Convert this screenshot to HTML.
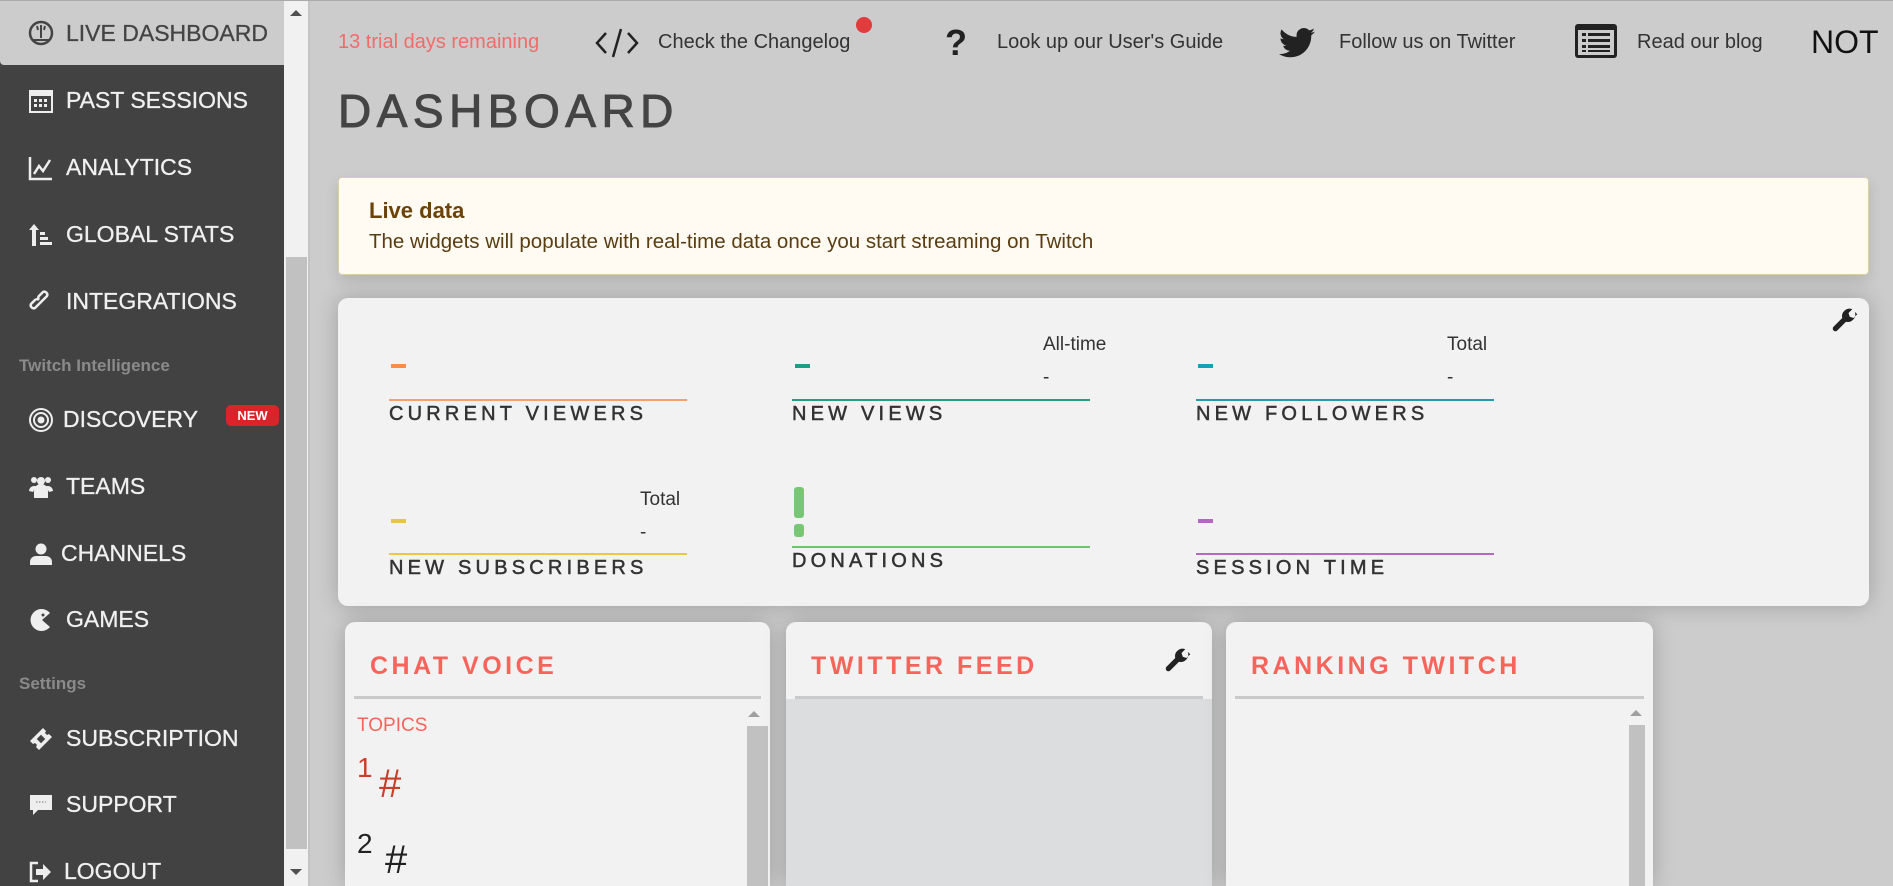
<!DOCTYPE html>
<html style="overflow:hidden;height:886px"><head><meta charset="utf-8"><style>
*{margin:0;padding:0;box-sizing:border-box}
body{width:1893px;height:886px;overflow:hidden;background:#cccccc;font-family:"Liberation Sans",sans-serif;position:relative}
.a{position:absolute;white-space:nowrap}
#sb{left:0;top:0;width:284px;height:886px;background:#424242}
.mi{position:absolute;left:0;width:284px;height:66px;color:#f0f0f0;font-size:23px;line-height:66px;-webkit-text-stroke:0.3px #f0f0f0}
.mi .ic{position:absolute;left:28px;top:21px;width:26px;height:26px}
.mi .t{position:absolute;left:66px}
.sec{position:absolute;left:19px;color:#8a8a8a;font-weight:bold;font-size:17px}
.lbl{font-size:20px;letter-spacing:4.2px;color:#333;-webkit-text-stroke:0.5px #333}
.ul{position:absolute;height:1.5px;width:298px}
.dash{position:absolute;width:15px;height:4px}
.sm{font-size:19px;color:#333}
.card{position:absolute;background:#f2f2f2;border-radius:10px;box-shadow:0 0 22px rgba(0,0,0,.22);overflow:hidden}
.ct{position:absolute;left:25px;top:30px;font-size:25px;letter-spacing:3.5px;color:#f7645c;font-weight:bold}
.cl{position:absolute;left:9px;right:9px;top:74px;height:3px;background:#cacaca}
.tb{font-size:20px;color:#333}
</style></head><body>
<div style="position:absolute;left:0;top:0;width:1893px;height:1px;background:#aaa;z-index:5"></div>
<div id="sb" class="a">
 <div class="mi" style="top:0;height:65px;background:#cccccc;color:#444;-webkit-text-stroke:0.3px #444;border-bottom-left-radius:4px">
  <svg class="ic" viewBox="0 0 26 26" style="top:20px"><circle cx="13" cy="13" r="11" fill="none" stroke="#444" stroke-width="2.5"/><path d="M13 5v13M9 6l1 4M17 6l-1 4" stroke="#444" stroke-width="2"/><path d="M5 20h16" stroke="#444" stroke-width="2"/></svg>
  <span class="t">LIVE DASHBOARD</span></div>
 <div class="mi" style="top:67px"><svg class="ic" viewBox="0 0 26 26"><rect x="2" y="3" width="22" height="21" fill="none" stroke="#eee" stroke-width="2"/><rect x="2" y="3" width="22" height="5" fill="#eee"/><g fill="#eee"><rect x="6" y="11" width="3" height="3"/><rect x="11" y="11" width="3" height="3"/><rect x="16" y="11" width="3" height="3"/><rect x="6" y="16" width="3" height="3"/><rect x="11" y="16" width="3" height="3"/><rect x="16" y="16" width="3" height="3"/></g></svg><span class="t">PAST SESSIONS</span></div>
 <div class="mi" style="top:134px"><svg class="ic" viewBox="0 0 26 26"><path d="M2 2v22h22" fill="none" stroke="#eee" stroke-width="2.5"/><path d="M6 19l5-8 4 5 7-11" fill="none" stroke="#eee" stroke-width="2.5"/></svg><span class="t">ANALYTICS</span></div>
 <div class="mi" style="top:201px"><svg class="ic" viewBox="0 0 26 26"><path d="M6 2l-5 6h3v16h4V8h3z" fill="#eee"/><rect x="12" y="10" width="5" height="3" fill="#eee"/><rect x="12" y="15" width="8" height="3" fill="#eee"/><rect x="12" y="20" width="12" height="3" fill="#eee"/></svg><span class="t">GLOBAL STATS</span></div>
 <div class="mi" style="top:268px"><svg class="ic" viewBox="0 0 26 26"><path d="M11 15l-4 4a3 3 0 0 1-4-4l4-4a3 3 0 0 1 4 0M15 11l4-4a3 3 0 0 0-4-4l-4 4a3 3 0 0 0 0 4M9 17l8-8" fill="none" stroke="#eee" stroke-width="2.5"/></svg><span class="t">INTEGRATIONS</span></div>
 <div class="sec" style="top:356px">Twitch Intelligence</div>
 <div class="mi" style="top:386px"><svg class="ic" viewBox="0 0 26 26"><circle cx="13" cy="13" r="11" fill="none" stroke="#eee" stroke-width="2"/><circle cx="13" cy="13" r="7" fill="none" stroke="#eee" stroke-width="2"/><circle cx="13" cy="13" r="3.5" fill="#eee"/></svg><span class="t" style="left:63px">DISCOVERY</span>
  <div style="position:absolute;left:226px;top:19px;width:53px;height:21px;background:#d9242a;border-radius:5px;color:#fff;font-size:13px;font-weight:bold;line-height:21px;text-align:center;-webkit-text-stroke:0">NEW</div></div>
 <div class="mi" style="top:453px"><svg class="ic" viewBox="0 0 26 26" fill="#eee"><circle cx="13" cy="7" r="4"/><circle cx="6" cy="6" r="3"/><circle cx="20" cy="6" r="3"/><path d="M6 24v-7a7 7 0 0 1 14 0v7z"/><path d="M1 17a5 5 0 0 1 5-5h2l-3 6zM25 17a5 5 0 0 0-5-5h-2l3 6z"/></svg><span class="t">TEAMS</span></div>
 <div class="mi" style="top:520px"><svg class="ic" viewBox="0 0 26 26" fill="#eee"><circle cx="13" cy="8" r="5.5"/><path d="M2 24v-3a6 6 0 0 1 6-6h10a6 6 0 0 1 6 6v3z"/></svg><span class="t" style="left:61px">CHANNELS</span></div>
 <div class="mi" style="top:586px"><svg class="ic" viewBox="0 0 26 26"><path d="M22 6A11 11 0 1 0 22 20L14 13z" fill="#eee"/><circle cx="15" cy="8" r="1.5" fill="#424242"/></svg><span class="t">GAMES</span></div>
 <div class="sec" style="top:674px">Settings</div>
 <div class="mi" style="top:705px"><svg class="ic" viewBox="0 0 26 26"><path d="M2 15L15 2l3 3-1 2 2 2 2-1 3 3L11 24l-3-3 1-2-2-2-2 1z" fill="#eee"/><rect x="10" y="10" width="6" height="6" transform="rotate(45 13 13)" fill="#424242"/></svg><span class="t">SUBSCRIPTION</span></div>
 <div class="mi" style="top:771px"><svg class="ic" viewBox="0 0 26 26"><path d="M2 3h22v15H10l-5 5v-5H2z" fill="#eee"/><path d="M8 10h10" stroke="#777" stroke-dasharray="1.5 1.5"/></svg><span class="t">SUPPORT</span></div>
 <div class="mi" style="top:838px"><svg class="ic" viewBox="0 0 26 26"><path d="M10 4H3v18h7" fill="none" stroke="#eee" stroke-width="2.5"/><path d="M8 10h7V5l8 8-8 8v-5H8z" fill="#eee"/></svg><span class="t" style="left:64px">LOGOUT</span></div>
</div>
<div class="a" style="left:284px;top:0;width:24px;height:886px;background:#f1f1f1"></div>
<div class="a" style="left:286px;top:257px;width:21px;height:592px;background:#c1c1c1"></div>
<div class="a" style="left:290px;top:10px;width:0;height:0;border-left:6px solid transparent;border-right:6px solid transparent;border-bottom:6px solid #505050"></div>
<div class="a" style="left:290px;top:869px;width:0;height:0;border-left:6px solid transparent;border-right:6px solid transparent;border-top:6px solid #505050"></div>
<div class="a" style="left:308px;top:0;width:2px;height:886px;background:#c4c4c4"></div>

<div class="a tb" style="left:338px;top:31px;color:#f56a6a">13 trial days remaining</div>
<svg class="a" style="left:595px;top:27px" width="44" height="32" viewBox="0 0 44 32"><path d="M11 6L2 16l9 10M33 6l9 10-9 10M26 2L18 30" fill="none" stroke="#222" stroke-width="2.5"/></svg>
<div class="a tb" style="left:658px;top:31px">Check the Changelog</div>
<div class="a" style="left:856px;top:17px;width:16px;height:16px;border-radius:50%;background:#e03c3c"></div>
<div class="a" style="left:945px;top:22px;font-size:36px;font-weight:bold;color:#222">?</div>
<div class="a tb" style="left:997px;top:31px">Look up our User's Guide</div>
<svg class="a" style="left:1279px;top:27px" width="36" height="32" viewBox="0 0 24 20"><path d="M24 2.4a10 10 0 0 1-2.8.8A4.9 4.9 0 0 0 23.3.4a9.900 9.9 0 0 1-3.1 1.2A4.9 4.9 0 0 0 11.8 6 14 14 0 0 1 1.7.9a4.9 4.9 0 0 0 1.5 6.6A4.9 4.9 0 0 1 1 6.9a4.9 4.9 0 0 0 3.9 4.8 4.9 4.9 0 0 1-2.2.1 4.9 4.9 0 0 0 4.6 3.4A9.9 9.9 0 0 1 0 17.3 14 14 0 0 0 7.5 19.5c9.1 0 14-7.5 14-14v-.6A10 10 0 0 0 24 2.4z" fill="#222"/></svg>
<div class="a tb" style="left:1339px;top:31px">Follow us on Twitter</div>
<svg class="a" style="left:1575px;top:24px" width="42" height="34" viewBox="0 0 42 34"><rect x="0" y="0" width="42" height="34" rx="3" fill="#222"/><rect x="3" y="6" width="36" height="25" fill="#ccc"/><g fill="#222"><rect x="7" y="9" width="4" height="3"/><rect x="13" y="9" width="22" height="3"/><rect x="7" y="15" width="4" height="3"/><rect x="13" y="15" width="22" height="3"/><rect x="7" y="21" width="4" height="3"/><rect x="13" y="21" width="22" height="3"/><rect x="7" y="26" width="4" height="2"/><rect x="13" y="26" width="22" height="2"/></g></svg>
<div class="a tb" style="left:1637px;top:31px">Read our blog</div>
<div class="a" style="left:1811px;top:24px;font-size:32px;color:#111">NOT</div>

<div class="a" style="left:338px;top:84px;font-size:46px;letter-spacing:5.5px;color:#444;-webkit-text-stroke:1px #444">DASHBOARD</div>

<div class="a" style="left:338px;top:177px;width:1531px;height:98px;background:#fffaf2;border:1px solid #dccfae;border-radius:4px;box-shadow:0 6px 14px rgba(0,0,0,.12)">
 <div class="a" style="left:30px;top:20px;font-size:22px;font-weight:bold;color:#6b4308">Live data</div>
 <div class="a" style="left:30px;top:52px;font-size:20.5px;color:#5a3d10">The widgets will populate with real-time data once you start streaming on Twitch</div>
</div>

<div class="card" style="left:338px;top:298px;width:1531px;height:308px;border-radius:10px"></div>
<svg class="a" style="left:1831px;top:308px" width="30" height="30" viewBox="0 0 24 24"><path d="M21 5l-3 3-3-1-1-3 3-3a6 6 0 0 0-8 7L2 15a2 2 0 0 0 3 3l7-7a6 6 0 0 0 7-8z" fill="#222"/></svg>
<div class="dash" style="left:391px;top:364px;background:#fb8c4a"></div>
<div class="ul" style="left:389px;top:399px;background:#f7a06b"></div>
<div class="a lbl" style="left:389px;top:403px">CURRENT VIEWERS</div>
<div class="dash" style="left:795px;top:364px;background:#18a086"></div>
<div class="ul" style="left:792px;top:399px;background:#249d84"></div>
<div class="a lbl" style="left:792px;top:403px">NEW VIEWS</div>
<div class="a sm" style="left:1043px;top:334px">All-time</div>
<div class="a sm" style="left:1043px;top:367px">-</div>
<div class="dash" style="left:1198px;top:364px;background:#13a2b8"></div>
<div class="ul" style="left:1196px;top:399px;background:#2898ad"></div>
<div class="a lbl" style="left:1196px;top:403px">NEW FOLLOWERS</div>
<div class="a sm" style="left:1447px;top:334px">Total</div>
<div class="a sm" style="left:1447px;top:367px">-</div>
<div class="dash" style="left:391px;top:519px;background:#e8c44c"></div>
<div class="ul" style="left:389px;top:553px;background:#ebc64a"></div>
<div class="a lbl" style="left:389px;top:557px">NEW SUBSCRIBERS</div>
<div class="a sm" style="left:640px;top:489px">Total</div>
<div class="a sm" style="left:640px;top:522px">-</div>
<div class="a" style="left:794px;top:487px;width:10px;height:31px;background:#77c777;border-radius:3px"></div>
<div class="a" style="left:794px;top:524px;width:10px;height:13px;background:#77c777;border-radius:3px"></div>
<div class="ul" style="left:792px;top:546px;background:#6fc56f"></div>
<div class="a lbl" style="left:792px;top:550px">DONATIONS</div>
<div class="dash" style="left:1198px;top:519px;background:#b566c2"></div>
<div class="ul" style="left:1196px;top:553px;background:#b56ac2"></div>
<div class="a lbl" style="left:1196px;top:557px">SESSION TIME</div>

<div class="card" style="left:345px;top:622px;width:425px;height:264px;border-bottom-left-radius:0;border-bottom-right-radius:0">
 <div class="ct" style="left:25px">CHAT VOICE</div><div class="cl"></div>
 <div class="a" style="left:12px;top:93px;font-size:19px;color:#f7645c">TOPICS</div>
 <div class="a" style="left:12px;top:130px;font-size:28px;color:#c8402a">1</div>
 <div class="a" style="left:34px;top:140px;font-size:40px;color:#c8402a">#</div>
 <div class="a" style="left:12px;top:206px;font-size:28px;color:#222">2</div>
 <div class="a" style="left:40px;top:216px;font-size:40px;color:#222">#</div>
 <div class="a" style="left:403px;top:89px;width:0;height:0;border-left:6px solid transparent;border-right:6px solid transparent;border-bottom:6px solid #a0a0a0"></div>
 <div class="a" style="left:402px;top:104px;width:21px;height:200px;background:#c1c1c1"></div>
</div>
<div class="card" style="left:786px;top:622px;width:426px;height:264px;border-bottom-left-radius:0;border-bottom-right-radius:0">
 <div class="ct">TWITTER FEED</div>
 <svg class="a" style="left:378px;top:26px" width="30" height="30" viewBox="0 0 24 24"><path d="M21 5l-3 3-3-1-1-3 3-3a6 6 0 0 0-8 7L2 15a2 2 0 0 0 3 3l7-7a6 6 0 0 0 7-8z" fill="#222"/></svg>
 <div class="cl"></div>
 <div class="a" style="left:0;right:0;top:77px;height:230px;background:#dcdddf"></div>
</div>
<div class="card" style="left:1226px;top:622px;width:427px;height:264px;border-bottom-left-radius:0;border-bottom-right-radius:0">
 <div class="ct" style="left:25px">RANKING TWITCH</div><div class="cl"></div>
 <div class="a" style="left:404px;top:88px;width:0;height:0;border-left:6px solid transparent;border-right:6px solid transparent;border-bottom:6px solid #a0a0a0"></div>
 <div class="a" style="left:403px;top:103px;width:16px;height:200px;background:#c1c1c1"></div>
</div>
</body></html>
